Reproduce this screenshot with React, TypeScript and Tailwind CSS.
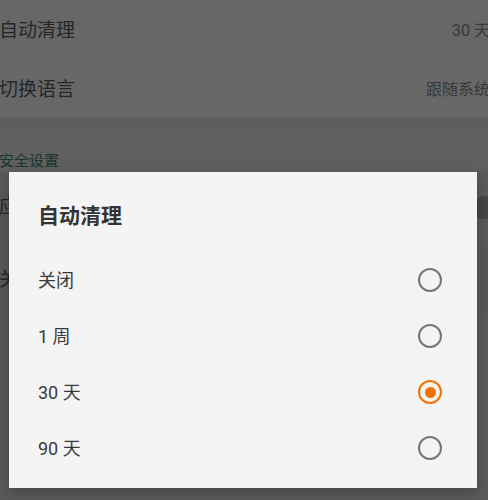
import React from 'react';

const options = [
  { id: 'off', label: '关闭' },
  { id: 'week', label: '1 周' },
  { id: 'month', label: '30 天' },
  { id: 'quarter', label: '90 天' },
];

const Radio: React.FC<{ checked: boolean }> = ({ checked }) => (
  <span
    className={`flex h-[24px] w-[24px] items-center justify-center rounded-full border-2 ${
      checked ? 'border-[#f27200]' : 'border-[#767676]'
    }`}
  >
    {checked && <span className="h-[11px] w-[11px] rounded-full bg-[#f27200]" />}
  </span>
);

const App: React.FC = () => {
  const selected = 'month';

  return (
    <div className="relative h-[500px] w-[488px] overflow-hidden bg-[#5a5a5a] font-[Roboto,'Noto_Sans_CJK_SC',sans-serif]">
      {/* settings page behind the scrim */}
      <div className="-ml-[1px] w-[491px]">
        <div className="flex h-[60px] items-center justify-between bg-[#676767] pt-[2px]">
          <span className="text-[19px] text-[#262626]">自动清理</span>
          <span className="text-[16px] text-[#383838]">30 天</span>
        </div>
        <div className="h-px bg-[#626262]" />
        <div className="flex h-[56px] items-center justify-between bg-[#676767] pt-[2px]">
          <span className="text-[19px] text-[#262626]">切换语言</span>
          <span className="text-[16px] text-[#383838]">跟随系统</span>
        </div>
        <div className="h-[11px] bg-[#5e5e5e]" />
        <div className="bg-[#606060]">
          <div className="pt-[23px] pb-[1px] text-[15px] leading-[20px] text-[#17362f]">安全设置</div>
          <div className="flex h-[73px] items-center justify-between bg-[#5b5b5b] pb-[2px]">
            <span className="text-[19px] text-[#262626]">应用锁</span>
            <span className="mr-[-6px] h-[23px] w-[23px] rounded-full bg-[#474747]" />
          </div>
          <div className="flex h-[70px] items-center bg-[#595959]">
            <span className="text-[19px] text-[#262626]">关于</span>
          </div>
        </div>
      </div>

      {/* dialog */}
      <div className="absolute left-[9px] top-[172px] flex h-[316px] w-[468px] flex-col bg-[#f4f4f4] pl-[29px] pr-[35px] pt-[30px] shadow-[0_4px_16px_rgba(0,0,0,0.25)]">
        <h2 className="text-[21px] font-bold leading-[28px] text-[#333333]">自动清理</h2>
        <div className="mt-[22px]">
          {options.map((opt) => (
            <div key={opt.id} className="flex h-[56px] items-center justify-between">
              <span className="text-[18px] text-[#3a3a3a]">{opt.label}</span>
              <Radio checked={opt.id === selected} />
            </div>
          ))}
        </div>
      </div>
    </div>
  );
};

export default App;
